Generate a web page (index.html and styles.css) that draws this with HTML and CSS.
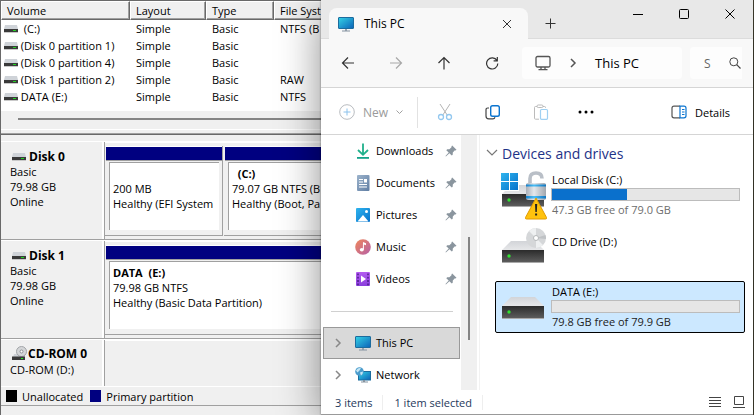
FILE: index.html
```html
<!DOCTYPE html>
<html lang="en">
<head>
    <meta charset="UTF-8">
    <meta name="viewport" content="width=device-width, initial-scale=1.0">
    <title>Disk Management and This PC</title>
    <link rel="stylesheet" href="styles.css">
</head>
<body>

<!-- Shared icons -->
<svg class="defs" aria-hidden="true">
    <defs>
        <linearGradient id="screen" x1="0" y1="0" x2="1" y2="1">
            <stop offset="0" stop-color="#35d3e6"/>
            <stop offset="1" stop-color="#0b62b8"/>
        </linearGradient>
        <linearGradient id="front" x1="0" y1="0" x2="0" y2="1">
            <stop offset="0" stop-color="#2b2b2b"/>
            <stop offset="1" stop-color="#5c5c5c"/>
        </linearGradient>
        <linearGradient id="lid" x1="0" y1="0" x2="0" y2="1">
            <stop offset="0" stop-color="#d2d4d8"/>
            <stop offset="1" stop-color="#e6e7e9"/>
        </linearGradient>
        <linearGradient id="flag" x1="0" y1="0" x2="1" y2="1">
            <stop offset="0" stop-color="#2fb4ee"/>
            <stop offset="1" stop-color="#0672cc"/>
        </linearGradient>
        <linearGradient id="metal" x1="0" y1="0" x2="1" y2="0">
            <stop offset="0" stop-color="#a9afb8"/>
            <stop offset="0.4" stop-color="#e4e8ec"/>
            <stop offset="1" stop-color="#a0a6ae"/>
        </linearGradient>
        <linearGradient id="lockblue" x1="0" y1="0" x2="1" y2="0">
            <stop offset="0" stop-color="#1480cc"/>
            <stop offset="0.4" stop-color="#49bdf5"/>
            <stop offset="1" stop-color="#1176c0"/>
        </linearGradient>
        <linearGradient id="warm" x1="0" y1="0" x2="1" y2="1">
            <stop offset="0" stop-color="#f0875a"/>
            <stop offset="1" stop-color="#b560a8"/>
        </linearGradient>
        <linearGradient id="paper" x1="0" y1="0" x2="1" y2="1">
            <stop offset="0" stop-color="#9db4cc"/>
            <stop offset="1" stop-color="#5f7da3"/>
        </linearGradient>
        <linearGradient id="purple" x1="0" y1="0" x2="0" y2="1">
            <stop offset="0" stop-color="#b45cf0"/>
            <stop offset="1" stop-color="#8a3fdc"/>
        </linearGradient>
        <symbol id="disk" viewBox="0 0 14 8">
            <path d="M1 0h12l1 4H0z" fill="#cfd3d8"/>
            <path d="M0 4h14v3H0z" fill="#3a3a3a"/>
            <path d="M0 7h14v1H0z" fill="#c9c9c9"/>
            <path d="M9 5h3v1H9z" fill="#21d321"/>
        </symbol>
        <symbol id="pc" viewBox="0 0 16 16">
            <rect x="0.500" y="1.500" width="15" height="11" rx="0.500" fill="url(#screen)" stroke="#1c6c9e"/>
            <path d="M7 13h2v2H7z" fill="#9aa5b0"/>
            <path d="M4 14.500h8v1H4z" fill="#8593a0"/>
        </symbol>
        <symbol id="pin" viewBox="0 0 12 12">
            <path d="M7.200 0.500L11.500 4.800L10.700 5.600L9.900 5.300L7.800 7.600L7.700 9.800L6.800 10.600L4.400 8.200L0.900 11.400L0.500 11L3.700 7.500L1.300 5.200L2.200 4.300L4.400 4.200L6.700 2.100L6.400 1.300z" fill="#8a959e"/>
        </symbol>
        <symbol id="chev" viewBox="0 0 8 10">
            <path d="M2 1l4 4l-4 4" fill="none" stroke="currentColor" stroke-width="1.500"/>
        </symbol>
        <symbol id="drive" viewBox="0 0 50 50">
            <path d="M11 15h24l9 9H2z" fill="url(#lid)"/>
            <path d="M2 24h42v12H2z" fill="url(#front)"/>
            <path d="M2 36h42v1H2z" fill="#a9a9a9"/>
            <circle cx="9" cy="30" r="1.700" fill="#2fe22f"/>
        </symbol>
    </defs>
</svg>

<section class="diskmgmt" aria-label="Disk Management">
    <table class="volumes">
        <thead>
            <tr>
                <th class="col-volume">Volume</th>
                <th class="col-layout">Layout</th>
                <th class="col-type">Type</th>
                <th>File Syst</th>
            </tr>
        </thead>
        <tbody>
            <tr><td><svg class="disk"><use href="#disk"/></svg>&nbsp; (C:)</td><td>Simple</td><td>Basic</td><td>NTFS (B</td></tr>
            <tr><td><svg class="disk"><use href="#disk"/></svg>&nbsp;(Disk 0 partition 1)</td><td>Simple</td><td>Basic</td><td></td></tr>
            <tr><td><svg class="disk"><use href="#disk"/></svg>&nbsp;(Disk 0 partition 4)</td><td>Simple</td><td>Basic</td><td></td></tr>
            <tr><td><svg class="disk"><use href="#disk"/></svg>&nbsp;(Disk 1 partition 2)</td><td>Simple</td><td>Basic</td><td>RAW</td></tr>
            <tr><td><svg class="disk"><use href="#disk"/></svg>&nbsp;DATA (E:)</td><td>Simple</td><td>Basic</td><td>NTFS</td></tr>
        </tbody>
    </table>
    <div class="hscroll"></div>
    <div class="splitter"></div>

    <div class="disk-row">
        <div class="disk-label">
            <strong><svg class="disk"><use href="#disk"/></svg>Disk 0</strong>
            <span>Basic</span>
            <span>79.98 GB</span>
            <span>Online</span>
        </div>
        <div class="partitions">
            <div class="partition small">
                <div class="stripe"></div>
                <div class="info">
                    <strong>&nbsp;</strong>
                    <span>200 MB</span>
                    <span>Healthy (EFI System</span>
                </div>
            </div>
            <div class="partition">
                <div class="stripe"></div>
                <div class="info">
                    <strong>&nbsp; (C:)</strong>
                    <span>79.07 GB NTFS (B</span>
                    <span>Healthy (Boot, Pa</span>
                </div>
            </div>
        </div>
    </div>

    <div class="disk-row">
        <div class="disk-label">
            <strong><svg class="disk"><use href="#disk"/></svg>Disk 1</strong>
            <span>Basic</span>
            <span>79.98 GB</span>
            <span>Online</span>
        </div>
        <div class="partitions">
            <div class="partition">
                <div class="stripe"></div>
                <div class="info">
                    <strong>DATA&nbsp; (E:)</strong>
                    <span>79.98 GB NTFS</span>
                    <span>Healthy (Basic Data Partition)</span>
                </div>
            </div>
        </div>
    </div>

    <div class="disk-row cdrom">
        <div class="disk-label">
            <strong>
                <svg class="cd" viewBox="0 0 16 16">
                    <path d="M2 8h10l1 3H1z" fill="#cfd3d8"/>
                    <circle cx="9.500" cy="5.500" r="5" fill="#d4d6d8" stroke="#a2a5a8"/>
                    <circle cx="9.500" cy="5.500" r="1.500" fill="#fff" stroke="#8c8f92"/>
                    <path d="M0 10.500h13V14H0z" fill="#3a3a3a"/>
                    <path d="M9 12h2v1H9z" fill="#21f321"/>
                </svg>CD-ROM 0</strong>
            <span>CD-ROM (D:)</span>
        </div>
        <div class="partitions"></div>
    </div>

    <div class="legend">
        <span class="swatch unallocated"></span>Unallocated
        <span class="swatch primary"></span>Primary partition
    </div>
</section>

<main class="explorer">
    <header class="titlebar">
        <div class="tab">
            <svg class="icon"><use href="#pc"/></svg>
            <span class="tab-title">This PC</span>
            <button class="plain" aria-label="Close tab">
                <svg width="10" height="10" viewBox="0 0 10 10"><path d="M1 1l8 8M9 1l-8 8" stroke="#333" fill="none"/></svg>
            </button>
        </div>
        <button class="plain newtab" aria-label="New tab">
            <svg width="11" height="11" viewBox="0 0 11 11"><path d="M5.500 0.500v10M0.500 5.500h10" stroke="#333" fill="none"/></svg>
        </button>
        <div class="caption">
            <button class="plain" aria-label="Minimize">
                <svg width="10" height="10" viewBox="0 0 10 10"><path d="M0 5.500h10" stroke="#000"/></svg>
            </button>
            <button class="plain" aria-label="Maximize">
                <svg width="10" height="10" viewBox="0 0 10 10"><rect x="0.500" y="0.500" width="9" height="9" rx="1" stroke="#000" fill="none"/></svg>
            </button>
            <button class="plain" aria-label="Close">
                <svg width="10" height="10" viewBox="0 0 10 10"><path d="M0.500 0.500l9 9M9.500 0.500l-9 9" stroke="#000" fill="none"/></svg>
            </button>
        </div>
    </header>

    <nav class="navbar" aria-label="Navigation">
        <button class="plain step" aria-label="Back">
            <svg width="14" height="14" viewBox="0 0 14 14"><path d="M13 7H1.500M7 1.500L1.500 7L7 12.500" stroke="#333" stroke-width="1.200" fill="none"/></svg>
        </button>
        <button class="plain step" aria-label="Forward" disabled>
            <svg width="14" height="14" viewBox="0 0 14 14"><path d="M1 7h11.500M7 1.500L12.500 7L7 12.500" stroke="#a8a8a8" stroke-width="1.200" fill="none"/></svg>
        </button>
        <button class="plain step" aria-label="Up">
            <svg width="14" height="14" viewBox="0 0 14 14"><path d="M7 13.500V1.500M1.500 7L7 1.500L12.500 7" stroke="#333" stroke-width="1.200" fill="none"/></svg>
        </button>
        <button class="plain step" aria-label="Refresh">
            <svg width="14" height="14" viewBox="0 0 14 14"><path d="M12 4.500A5.600 5.600 0 1 0 12.800 7.500M12.300 1v3.800H8.600" stroke="#333" stroke-width="1.200" fill="none"/></svg>
        </button>
        <div class="address">
            <svg width="16" height="16" viewBox="0 0 16 16"><rect x="1" y="1.500" width="14" height="10.500" rx="1.500" stroke="#555" stroke-width="1.300" fill="none"/><path d="M6 12v2.500M10 12v2.500M3.500 14.700h9" stroke="#555" stroke-width="1.300"/></svg>
            <svg class="chev"><use href="#chev"/></svg>
            <a class="crumb" href="#">This PC</a>
        </div>
        <div class="search">
            <input type="text" placeholder="S" aria-label="Search This PC">
            <svg width="12" height="12" viewBox="0 0 12 12"><circle cx="4.800" cy="4.800" r="4" stroke="#444" fill="none"/><path d="M7.700 7.700L11.500 11.500" stroke="#444" stroke-width="1.200"/></svg>
        </div>
    </nav>

    <div class="toolbar">
        <button class="plain new" disabled>
            <svg width="16" height="16" viewBox="0 0 16 16"><circle cx="8" cy="8" r="7.300" stroke="#b9bcc0" fill="none"/><path d="M8 4.500v7M4.500 8h7" stroke="#8cc2ec"/></svg>
            <span>New</span>
            <svg width="7" height="5" viewBox="0 0 7 5"><path d="M0.500 0.500l3 3l3-3" stroke="#a0a0a0" fill="none"/></svg>
        </button>
        <button class="plain tool" aria-label="Cut" disabled>
            <svg width="16" height="18" viewBox="0 0 16 18"><path d="M3 1l7.300 11.200M13 1L5.700 12.200" stroke="#b4b4b4" fill="none"/><circle cx="4" cy="14" r="2.500" stroke="#94c8ef" stroke-width="1.300" fill="none"/><circle cx="12" cy="14" r="2.500" stroke="#94c8ef" stroke-width="1.300" fill="none"/></svg>
        </button>
        <button class="plain tool" aria-label="Copy">
            <svg width="16" height="16" viewBox="0 0 16 16"><path d="M4 4H2.800Q1 4 1 5.800V12q0 2.800 2.800 2.800H8q1.500 0 2-1.600" stroke="#444" stroke-width="1.200" fill="none"/><rect x="5.700" y="1.700" width="8.600" height="10.600" rx="1.800" stroke="#0b74cf" stroke-width="1.400" fill="#fff"/></svg>
        </button>
        <button class="plain tool" aria-label="Paste" disabled>
            <svg width="16" height="16" viewBox="0 0 16 16"><path d="M4 2.500H2.500Q1.500 2.500 1.500 3.500v10.700q0 1 1 1H6M10 2.500h1.500q1 0 1 1V4" stroke="#bbb" fill="none"/><rect x="4" y="1" width="6" height="2.500" rx="1.200" stroke="#bbb" fill="#fff"/><rect x="7.500" y="5.500" width="7" height="9.800" rx="1" stroke="#9fd0f2" stroke-width="1.200" fill="#fff"/></svg>
        </button>
        <button class="plain tool more" aria-label="See more">
            <svg width="16" height="4" viewBox="0 0 16 4"><circle cx="2" cy="2" r="1.500"/><circle cx="8" cy="2" r="1.500"/><circle cx="14" cy="2" r="1.500"/></svg>
        </button>
        <button class="plain details">
            <svg width="16" height="14" viewBox="0 0 16 14"><path d="M9 1.200H3Q1 1.200 1 3.200v7.600q0 2 2 2h6" stroke="#555" stroke-width="1.200" fill="none"/><path d="M9 1.200h4q2 0 2 2v7.600q0 2-2 2H9zM11 4.500h2.500M11 7h2.500M11 9.500h2.500" stroke="#0b74cf" stroke-width="1.200" fill="none"/></svg>
            Details
        </button>
    </div>

    <div class="content">
        <nav class="sidebar" aria-label="Quick access">
            <a class="side-item pinned" href="#">
                <svg class="icon" viewBox="0 0 16 16"><path d="M8 0.500v11M3 7l5 4.800L13 7" stroke="#1fb08b" stroke-width="1.800" fill="none"/><path d="M2 14h12v1.800H2z" fill="#14a38a"/></svg>
                <span>Downloads</span><svg class="pin"><use href="#pin"/></svg>
            </a>
            <a class="side-item pinned" href="#">
                <svg class="icon" viewBox="0 0 16 16"><rect x="2" y="0" width="12.500" height="16" rx="1" fill="url(#paper)"/><path d="M4 4.500h4M4 7h4M4 9.500h8M4 12h8" stroke="#fff" stroke-width="1.200"/><path d="M9 4h3v3.500H9z" fill="#fff"/></svg>
                <span>Documents</span><svg class="pin"><use href="#pin"/></svg>
            </a>
            <a class="side-item pinned" href="#">
                <svg class="icon" viewBox="0 0 16 16"><rect x="1" y="1" width="14" height="14" rx="1" fill="url(#flag)"/><path d="M2.500 14.500L8 8l5.500 6.500z" fill="#fff"/><circle cx="11.500" cy="4.500" r="1.500" fill="#fff"/></svg>
                <span>Pictures</span><svg class="pin"><use href="#pin"/></svg>
            </a>
            <a class="side-item pinned" href="#">
                <svg class="icon" viewBox="0 0 16 16"><circle cx="8" cy="8" r="7.800" fill="url(#warm)"/><ellipse cx="6.800" cy="10.800" rx="2" ry="1.800" fill="#fff"/><path d="M8 3l3 1.200v2L8.900 5.500v5.300H7.800z" fill="#fff"/></svg>
                <span>Music</span><svg class="pin"><use href="#pin"/></svg>
            </a>
            <a class="side-item pinned" href="#">
                <svg class="icon" viewBox="0 0 16 16"><rect x="1" y="1" width="14" height="14" rx="1" fill="url(#purple)"/><path d="M3 2.500v12M13 2.500v12" stroke="#4b1c88" stroke-width="1.500" stroke-dasharray="1.800 1.500"/><path d="M6 4.500l5 3.500l-5 3.500z" fill="#fff"/></svg>
                <span>Videos</span><svg class="pin"><use href="#pin"/></svg>
            </a>
            <hr class="rule">
            <a class="side-item current" href="#">
                <svg class="chev"><use href="#chev"/></svg>
                <svg class="icon"><use href="#pc"/></svg>
                <span>This PC</span>
            </a>
            <a class="side-item" href="#">
                <svg class="chev"><use href="#chev"/></svg>
                <svg class="icon" viewBox="0 0 16 16"><rect x="3.500" y="4.500" width="12" height="8.500" fill="url(#screen)" stroke="#1c6c9e"/><path d="M8 13h2v2H8zM6 14.500h7v1H6z" fill="#8593a0"/><circle cx="4.500" cy="4.500" r="4.300" fill="#4b9ccc"/><path d="M1 3.500Q3 0.500 6 1.200L4.500 3.500L2.500 5.500zM5 5.500l3-1q0 3-2 4z" fill="#c5e6f5"/></svg>
                <span>Network</span>
            </a>
        </nav>
        <div class="vscroll"><div class="thumb"></div></div>
        <section class="files">
            <h2 class="group">
                <svg width="12" height="8" viewBox="0 0 12 8"><path d="M1 1l5 5l5-5" stroke="#777" fill="none" stroke-width="1.200"/></svg>
                Devices and drives
            </h2>
            <div class="tile">
                <svg class="big" viewBox="0 0 50 50">
                    <use href="#drive" width="50" height="50"/>
                    <path d="M0 2h19v19H0z" fill="#fff"/>
                    <path d="M1 3h8v8H1zM10 3h8v8h-8zM1 12h8v8H1zM10 12h8v8h-8z" fill="url(#flag)"/>
                    <path d="M30 14V8.500Q30 3 36 3T42 8.500" fill="none" stroke="#b9bfc7" stroke-width="3.600"/>
                    <rect x="26" y="13" width="20" height="17" rx="2" fill="url(#metal)"/>
                    <path d="M26 14.500h20v2H26zM26 26h20v2.500H26z" fill="url(#lockblue)"/>
                    <path d="M36 28l10.500 19.500q0.500 1.500-1 1.500h-19q-1.500 0-1-1.500z" fill="#ffc20e" stroke="#e09a00"/>
                    <path d="M35 34h2.200l-0.400 8h-1.400zM35.100 43.500h2v2h-2z" fill="#222"/>
                </svg>
                <div class="tile-text">
                    <span>Local Disk (C:)</span>
                    <div class="meter"><div class="used" style="width: 40%"></div></div>
                    <span class="free">47.3 GB free of 79.0 GB</span>
                </div>
            </div>
            <div class="tile">
                <svg class="big" viewBox="0 0 50 50">
                    <use href="#drive" width="50" height="50"/>
                    <circle cx="36" cy="12" r="10" fill="#d5d7d9"/>
                    <path d="M36 12L29 5A10 10 0 0 1 36 2zM36 12l7 7a10 10 0 0 1-7 3z" fill="#eef0f1"/>
                    <path d="M36 12l9.500-3a10 10 0 0 1 0.500 4z" fill="#bfc2c5"/>
                    <circle cx="36" cy="12" r="2.500" fill="#fff" stroke="#b5b8ba"/>
                </svg>
                <div class="tile-text single">
                    <span>CD Drive (D:)</span>
                </div>
            </div>
            <div class="tile selected">
                <svg class="big" viewBox="0 0 50 50"><use href="#drive" width="50" height="50"/></svg>
                <div class="tile-text">
                    <span>DATA (E:)</span>
                    <div class="meter"></div>
                    <span class="free">79.8 GB free of 79.9 GB</span>
                </div>
            </div>
        </section>
    </div>

    <footer class="status">
        <span class="status-part">3 items</span>
        <span class="status-part">1 item selected</span>
        <div class="views">
            <button class="plain" aria-label="Details view">
                <svg width="12" height="12" viewBox="0 0 12 12"><path d="M0 1.500h12M0 4.500h12M0 7.500h12M0 10.500h12" stroke="#444"/></svg>
            </button>
            <button class="plain" aria-label="Large icons view">
                <svg width="12" height="12" viewBox="0 0 12 12"><path d="M1.500 0.500h9v8h-9zM0 11.500h12" stroke="#444" fill="none"/></svg>
            </button>
        </div>
    </footer>
</main>

</body>
</html>
```
FILE: styles.css
```css
* {
    box-sizing: border-box;
}
body {
    margin: 0;
    height: 100vh;
    overflow: hidden;
    position: relative;
    background-color: #4c4a38;
    font-family: 'Open Sans', 'Noto Sans', sans-serif;
    font-size: 11px;
    line-height: 15px;
    color: #000;
}
svg {
    flex: none;
    display: block;
}
a {
    color: inherit;
    text-decoration: none;
}
.defs {
    position: absolute;
    width: 0;
    height: 0;
}
.plain {
    display: flex;
    align-items: center;
    justify-content: center;
    padding: 0;
    border: none;
    background: none;
    font: inherit;
    color: inherit;
}

/* Disk Management window */
.diskmgmt {
    display: flex;
    flex-direction: column;
    width: 86%;
    height: 100%;
    background-color: #f0f0f0;
    border-left: 1px solid #696969;
    border-top: 1px solid #696969;
}
.volumes {
    table-layout: fixed;
    width: 100%;
    border-collapse: separate;
    border-spacing: 0;
    background-color: #fff;
    border-bottom: 6px solid #fff;
}
.volumes th {
    height: 19px;
    padding: 0 0 0 5px;
    text-align: left;
    font-weight: normal;
    background-color: #f0f0f0;
    border: 1px solid #fff;
    border-right-color: #696969;
    border-bottom-color: #696969;
    box-shadow: inset -1px -1px #a0a0a0;
}
.col-volume {
    width: 129px;
}
.col-layout {
    width: 76px;
}
.col-type {
    width: 68px;
}
.volumes td {
    height: 17px;
    padding: 0 0 0 6px;
    white-space: nowrap;
    overflow: hidden;
}
.volumes td:first-child {
    padding-left: 3px;
}
.disk {
    display: inline-block;
    width: 14px;
    height: 8px;
}
.hscroll {
    height: 18px;
    padding: 7px 0 0 17px;
}
.hscroll::before {
    content: "";
    display: block;
    height: 2px;
    background-color: #858585;
}
.splitter {
    height: 6px;
    margin-bottom: 6px;
    border-top: 1px solid #fff;
    border-bottom: 1px solid #696969;
    box-shadow: inset 0 -1px #a0a0a0;
}
.disk-row {
    display: flex;
    height: 99px;
    border-top: 1px solid #fff;
    border-bottom: 1px solid #a0a0a0;
}
.disk-label {
    display: flex;
    flex-direction: column;
    width: 104px;
    padding: 7px 0 0 9px;
    border-right: 1px solid #a0a0a0;
    box-shadow: inset -2px 0 #fff;
}
.disk-label strong {
    display: flex;
    align-items: center;
    gap: 3px;
    padding-left: 2px;
    font-size: 12px;
}
.partitions {
    flex: 1;
    display: flex;
    gap: 1px;
    min-width: 0;
    padding: 4px 0 3px;
    box-shadow: inset 0 1px #fff;
}
.partition {
    flex: 1;
    min-width: 0;
    padding-left: 1px;
    border-right: 1px solid #a0a0a0;
    border-bottom: 1px solid #a0a0a0;
}
.partition.small {
    flex: none;
    width: 118px;
}
.stripe {
    height: 14px;
    margin-bottom: 2px;
    background-color: #000080;
    border-top: 1px solid #fff;
    box-shadow: 0 1px #a0a0a0;
}
.info {
    display: flex;
    flex-direction: column;
    height: 68px;
    margin: 2px 3px 4px;
    padding: 3px;
    white-space: nowrap;
    overflow: hidden;
    background-color: #fff;
    border-left: 1px solid #a0a0a0;
    border-top: 1px solid #a0a0a0;
}
.cdrom {
    height: 47px;
    border-bottom: none;
}
.cdrom .disk-label {
    padding-top: 6px;
}
.cdrom .disk-label strong {
    gap: 0;
    line-height: 16px;
}
.cd {
    width: 16px;
    height: 16px;
}
.legend {
    display: flex;
    align-items: center;
    gap: 5px;
    height: 20px;
    padding-left: 5px;
    border-top: 1px solid #fff;
    border-bottom: 1px solid #a0a0a0;
}
.swatch {
    width: 11px;
    height: 12px;
}
.unallocated {
    background-color: #000;
}
.primary {
    margin-left: 2px;
    background-color: #000080;
}

/* Explorer window */
.explorer {
    position: absolute;
    top: 0;
    right: 1px;
    bottom: 0;
    left: 321px;
    display: flex;
    flex-direction: column;
    background-color: #fff;
    border-bottom: 1px solid #999;
    box-shadow: 0 8px 40px rgba(0, 0, 0, 0.45), 0 0 2px rgba(0, 0, 0, 0.4);
}
.titlebar {
    display: flex;
    height: 39px;
    padding-left: 8px;
    background-color: #e8e8e8;
    border-bottom: 1px solid #dcdcdc;
}
.tab {
    display: flex;
    align-items: center;
    width: 199px;
    margin: 8px 0 -1px;
    padding: 0 16px 0 9px;
    gap: 10px;
    background-color: #f8f8f8;
    border-radius: 8px 8px 0 0;
}
.icon {
    width: 16px;
    height: 16px;
}
.tab-title {
    flex: 1;
    font-size: 12px;
    font-weight: 500;
}
.newtab {
    margin: 8px 0 0 17px;
}
.caption {
    display: flex;
    gap: 36px;
    height: 28px;
    margin-left: auto;
    padding-right: 18px;
}
.navbar {
    display: flex;
    align-items: center;
    height: 49px;
    padding: 0 11px 0 3px;
    background-color: #f8f8f8;
    border-bottom: 1px solid #d5d5d5;
}
.step {
    width: 48px;
    height: 32px;
}
.address {
    flex: 1;
    display: flex;
    align-items: center;
    height: 32px;
    margin: 0 8px 0 6px;
    padding-left: 13px;
    gap: 18px;
    background-color: #fdfdfd;
    border-radius: 4px;
}
.chev {
    width: 8px;
    height: 10px;
    color: #555;
}
.crumb {
    font-size: 13px;
}
.search {
    display: flex;
    align-items: center;
    justify-content: space-between;
    width: 52px;
    height: 32px;
    padding: 0 1px 0 14px;
    background-color: #fdfdfd;
    border-radius: 4px 0 0 4px;
}
.search input {
    width: 8px;
    padding: 0;
    border: none;
    outline: none;
    background: none;
    font: inherit;
    font-size: 12px;
}
.search input::placeholder {
    color: #666;
}
.toolbar {
    display: flex;
    align-items: center;
    height: 47px;
    padding-top: 2px;
    border-bottom: 1px solid #d5d5d5;
}
.new {
    justify-content: flex-start;
    gap: 8px;
    height: 31px;
    width: 97px;
    padding-left: 18px;
    margin-right: 3px;
    border-right: 1px solid #e2e2e2;
    color: #9a9a9a;
    font-size: 12px;
}
.tool {
    width: 48px;
    height: 32px;
}
.more {
    width: 42px;
}
.details {
    gap: 8px;
    margin-left: auto;
    margin-right: 23px;
}
.content {
    flex: 1;
    display: flex;
    min-height: 0;
}
.sidebar {
    flex: none;
    width: 140px;
    padding: 0 1px 0 2px;
    overflow: hidden;
}
.side-item {
    display: flex;
    align-items: center;
    gap: 5px;
    height: 32px;
    padding: 0 2px 0 10px;
    border: 1px solid transparent;
}
.side-item span {
    padding-bottom: 1px;
}
.side-item .icon {
    margin-left: 8px;
}
.side-item .chev {
    color: #888;
}
.pinned {
    padding-left: 23px;
}
.pin {
    width: 12px;
    height: 12px;
    margin-left: auto;
}
.current {
    background-color: #d9d9d9;
    border-color: #999;
}
.rule {
    height: 1px;
    margin: 16px 7px 15px 8px;
    border: none;
    background-color: #d0d0d0;
}
.vscroll {
    width: 16px;
    padding: 102px 7px 0;
    background-color: #f0f0f0;
}
.thumb {
    height: 103px;
    background-color: #858585;
}
.files {
    flex: 1;
    display: flex;
    flex-direction: column;
    gap: 4px;
    margin-left: 2px;
    padding: 8px 8px 0 15px;
    border-left: 1px solid #f2f2f2;
}
.group {
    display: flex;
    align-items: center;
    gap: 4px;
    height: 20px;
    margin: 0 0 2px -9px;
    font-size: 14px;
    font-weight: normal;
    color: #1e3287;
}
.tile {
    display: flex;
    height: 52px;
    padding-left: 4px;
    border: 1px solid #fff;
    border-radius: 2px;
}
.big {
    width: 50px;
    height: 50px;
}
.tile-text {
    flex: 1;
    display: flex;
    flex-direction: column;
    gap: 1px;
    padding: 2px 4px 0 1px;
}
.tile-text span {
    padding-left: 1px;
}
.single {
    padding-top: 8px;
}
.meter {
    height: 13px;
    background-color: #e6e6e6;
    border: 1px solid #bcbcbc;
}
.used {
    height: 100%;
    background-color: #0a70cc;
}
.free {
    color: #6d6d6d;
}
.selected {
    background-color: #cce8ff;
    border-color: #000;
}
.selected .free {
    color: #222;
}
.status {
    display: flex;
    align-items: center;
    height: 24px;
    padding-right: 8px;
    color: #1e395b;
}
.status-part {
    padding: 0 10px 0 14px;
    border-right: 1px solid #eee;
}
.status-part + .status-part {
    padding-left: 11px;
}
.views {
    display: flex;
    gap: 12px;
    margin-left: auto;
}
```
